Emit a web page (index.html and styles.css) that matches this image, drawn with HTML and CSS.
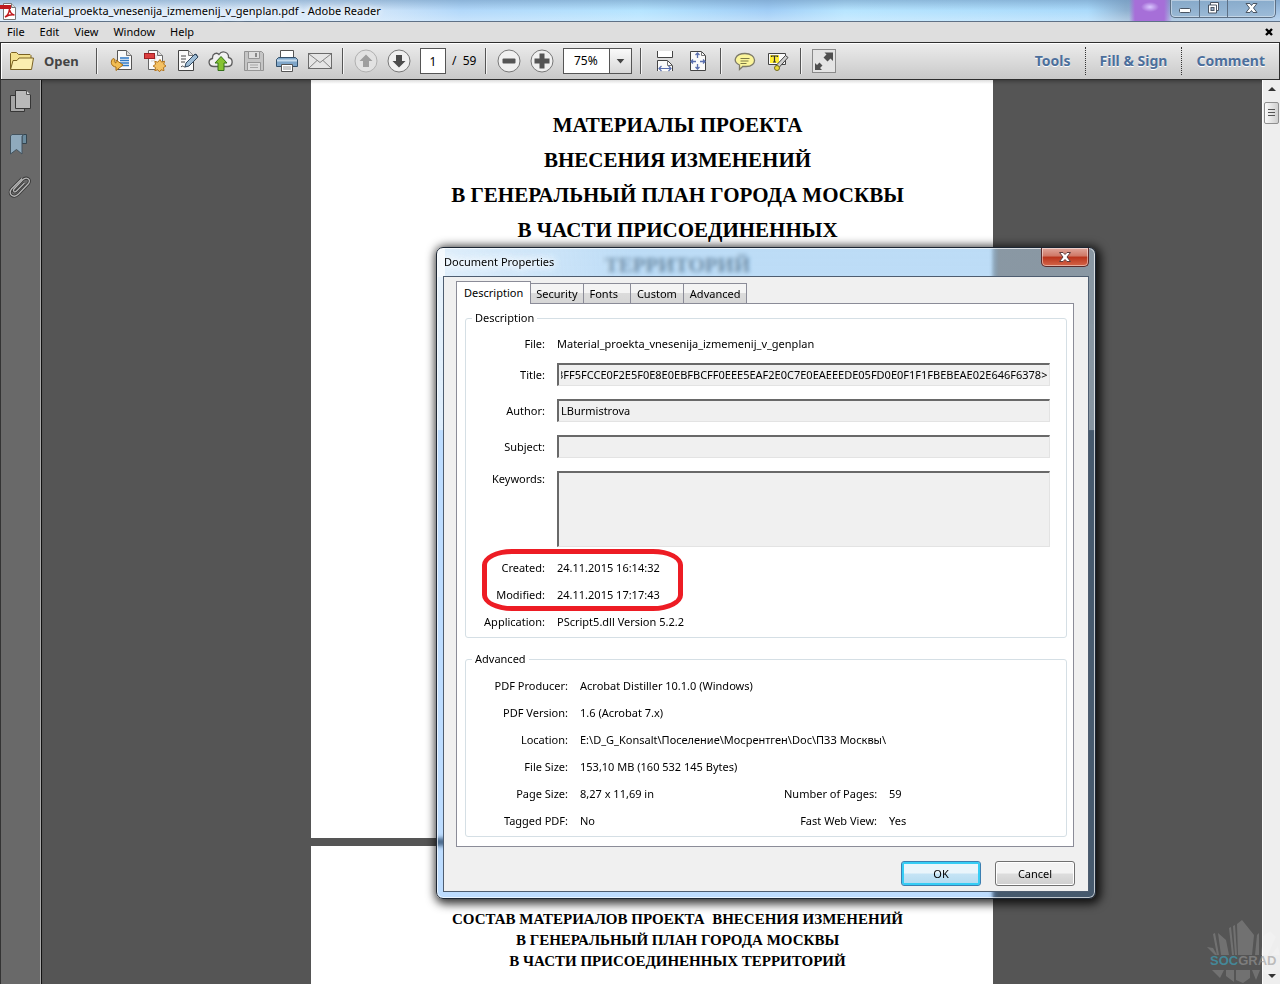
FILE: index.html
```html
<!DOCTYPE html>
<html lang="en">
<head>
<meta charset="utf-8">
<title>Material_proekta_vnesenija_izmemenij_v_genplan.pdf - Adobe Reader</title>
<link rel="stylesheet" href="styles.css">
</head>
<body>
<div class="app">
  <header class="titlebar">
    <svg class="app-icon" width="17" height="18" viewBox="0 0 17 18"><path d="M3.500 1.500h8l4 4v12h-12z" fill="#fff" stroke="#777"/><path d="M11.500 1.500v4h4" fill="#ddd" stroke="#777"/><path d="M0 3h11v4H0z" fill="#c01a1f"/><path d="M5 15c2-1 4-4 4.500-8 .5 3 2 5.500 5 6-3-.5-6 0-9.500 2z" fill="none" stroke="#c01a1f" stroke-width="1.500"/></svg>
    <span class="app-title">Material_proekta_vnesenija_izmemenij_v_genplan.pdf - Adobe Reader</span>
    <div class="win-buttons">
      <button aria-label="Minimize"><svg width="28" height="17" viewBox="0 0 28 17"><rect x="8.500" y="8.500" width="11" height="4" rx="1" fill="#fff" stroke="#4a5563"/></svg></button>
      <button aria-label="Restore"><svg width="27" height="17" viewBox="0 0 27 17"><path d="M10.500 2.500h8v8h-2v2.500h-8v-8h2z" fill="#fff" stroke="#4a5563"/><path d="M10.500 5h6v6" fill="none" stroke="#4a5563"/><rect x="11" y="7.500" width="3" height="3" fill="#9db4cc" stroke="#4a5563"/></svg></button>
      <button class="wide" aria-label="Close"><svg width="47" height="17" viewBox="0 0 47 17"><path d="M18 3.500h4l1.500 2 1.500-2h4l-3.500 4.500 3.500 4.500h-4l-1.500-2-1.500 2h-4l3.500-4.500z" fill="#fff" stroke="#4a5563"/></svg></button>
    </div>
  </header>

  <nav class="menubar">
    <button>File</button><button>Edit</button><button>View</button><button>Window</button><button>Help</button>
    <button class="menu-close" aria-label="Close document"><svg width="8" height="8" viewBox="0 0 8 8"><path d="M1 1l6 6M7 1l-6 6" stroke="#000" stroke-width="2.400"/></svg></button>
  </nav>

  <div class="toolbar">
    <button class="open"><svg width="26" height="24" viewBox="0 0 26 24"><path d="M1.500 20V4.500l1-1h5l2 2h11.500l1 1V9" fill="#f3e190" stroke="#7a6224"/><path d="M1.500 20.500L4 11.500h4l2-2.500h14.500l-2 11.500z" fill="#fbeeb0" stroke="#7a6224"/></svg>Open</button>
    <i class="sep"></i>
    <div class="group files">
      <button aria-label="Convert"><svg width="24" height="24" viewBox="0 0 24 24"><path d="M7.500 1.500h9l5 5v14h-14z" fill="#fafafa" stroke="#555"/><path d="M16.500 1.500v5h5" fill="#ddd" stroke="#777"/><path d="M10 9h9M10 11.500h9M10 14h9M11 16.500h8" stroke="#2f7ac6" stroke-width="1.300"/><path d="M3 9.500c-3 3-2 8 3 8.500v3.500l7-5.500-7-5v3c-2-.5-2-2-1-3.500z" fill="#f1bd53" stroke="#a66c11"/></svg></button>
      <button aria-label="Create PDF"><svg width="24" height="24" viewBox="0 0 24 24"><path d="M5.500 1.500h9l5 5v14h-14z" fill="#fafafa" stroke="#666"/><path d="M14.500 1.500v5h5" fill="#ddd" stroke="#777"/><rect x="1.500" y="4.500" width="10" height="5" fill="#dc3f3f" stroke="#9d2024"/><path d="M8 12c4 0 5-2 5-6" fill="none" stroke="#ccc"/><path d="M17 10.500l1.600 2.600 3-.9-.9 3 2.300 1.800-2.600 1.600.6 3-3-.8-1.500 2-1.700-2-3 .8.800-3-2.500-1.500 2.500-1.800-.8-3 3 .9z" fill="#f4c163" stroke="#b3741c"/></svg></button>
      <button aria-label="Sign"><svg width="24" height="24" viewBox="0 0 24 24"><path d="M2.500 1.500h10l5 5v15h-15z" fill="#fafafa" stroke="#444"/><path d="M12.500 1.500v5h5" fill="#ddd" stroke="#777"/><path d="M5 7h5M5 10h5M5 13h4M5 18c3-3 2 2 5-1" fill="none" stroke="#444"/><path d="M9 18l1-4L19 5l3 3-9 9z" fill="#9fbdd6" stroke="#30475e"/><path d="M18 6l2-1 2 3" fill="none" stroke="#30475e"/></svg></button>
      <button aria-label="Upload"><svg width="26" height="24" viewBox="0 0 26 24"><path d="M6 17.500c-6 0-6.500-7-1.500-8C4 4.500 9 3 11 5.500 14 1 21 3 20.500 8.500c5 1 5 9-1 9z" fill="#f1f1f1" stroke="#5c5c5c" stroke-width="1.300"/><path d="M13 7.500l6 6.500h-3v7.500h-6V14H7z" fill="#86c232" stroke="#35711b"/></svg></button>
      <button aria-label="Save" disabled><svg width="24" height="24" viewBox="0 0 24 24"><path d="M2.500 2.500h17l2 2v17h-19z" fill="#c5c5c5" stroke="#929292"/><path d="M6.500 2.500v7h11v-7zM5.500 13.500h13v8h-13z" fill="#dedede" stroke="#959595"/><rect x="13" y="4" width="2" height="4" fill="#888"/><path d="M8 16h8M8 18.500h8" stroke="#a5a5a5"/></svg></button>
      <button aria-label="Print"><svg width="24" height="24" viewBox="0 0 24 24"><path d="M5.500 1.500h13v9h-13z" fill="#fff" stroke="#555"/><path d="M1.500 10.500l2-2h17l2 2v7h-21z" fill="#7fa6c9" stroke="#34516b"/><path d="M2 11.500h20" stroke="#c9dded" stroke-width="2"/><path d="M6.500 15.500h11v7h-11z" fill="#fff" stroke="#555"/><path d="M8 18h8M8 20h8" stroke="#999"/></svg></button>
      <button aria-label="E-mail"><svg width="24" height="24" viewBox="0 0 24 24"><rect x=".5" y="4.500" width="23" height="15" fill="#e5e5e5" stroke="#6b6b6b"/><path d="M1 5l11 8.500L23 5M1 19l8-7.500M23 19l-8-7.500" fill="none" stroke="#838383"/></svg></button>
    </div>
    <i class="sep"></i>
    <div class="group">
      <button aria-label="Previous page" disabled><svg width="24" height="24" viewBox="0 0 24 24"><circle cx="12" cy="12" r="11" fill="#e2e2e2" stroke="#b0b0b0"/><path d="M12 5.500l6.500 6.500H15v6H9v-6H5.500z" fill="#9e9e9e"/></svg></button>
      <button aria-label="Next page"><svg width="24" height="24" viewBox="0 0 24 24"><circle cx="12" cy="12" r="11" fill="#f0f0f0" stroke="#777"/><path d="M12 18.500L5.500 12H9V6h6v6h3.500z" fill="#4c4c4c"/></svg></button>
    </div>
    <input class="page-no" aria-label="Page number" value="1">
    <span class="page-count">/&nbsp; 59</span>
    <i class="sep"></i>
    <div class="group">
      <button aria-label="Zoom out"><svg width="24" height="24" viewBox="0 0 24 24"><circle cx="12" cy="12" r="11" fill="#f0f0f0" stroke="#777"/><rect x="5.500" y="9.500" width="13" height="5" rx="1" fill="#555"/></svg></button>
      <button aria-label="Zoom in"><svg width="24" height="24" viewBox="0 0 24 24"><circle cx="12" cy="12" r="11" fill="#f0f0f0" stroke="#777"/><path d="M9.500 4.500h5v5h5v5h-5v5h-5v-5h-5v-5h5z" fill="#555"/></svg></button>
    </div>
    <div class="zoom">
      <select aria-label="Zoom level"><option>75%</option><option>100%</option></select>
      <svg class="zoom-arrow" width="22" height="24" viewBox="0 0 22 24"><path d="M7 10h8l-4 4.500z" fill="#444"/></svg>
    </div>
    <i class="sep"></i>
    <div class="group roomy">
      <button aria-label="Fit width"><svg width="24" height="24" viewBox="0 0 24 24"><path d="M4.500 2v6.500h15V2" fill="#fff" stroke="#444"/><path d="M4.500 22V11.500h10l5 5V22" fill="#fafafa" stroke="#444"/><path d="M14.500 11.500v5h5" fill="none" stroke="#777"/><path d="M6 19.500h12M8.500 17L6 19.500 8.500 22M15.500 17l2.500 2.500-2.500 2.500" fill="none" stroke="#5a6fae" stroke-width="1.200"/></svg></button>
      <button aria-label="Fit page"><svg width="24" height="24" viewBox="0 0 24 24"><path d="M4.500 2.500h11l4 4v15h-15z" fill="#fafafa" stroke="#444"/><path d="M15.500 2.500v4h4" fill="none" stroke="#777"/><path d="M5 12.500h5M14 12.500h5M11.500 4.500V9M11.500 15v5M7 10.500l-2 2 2 2M17 10.500l2 2-2 2M9.500 6l2-2 2 2M9.500 18l2 2 2-2" fill="none" stroke="#5a6fae" stroke-width="1.300"/></svg></button>
    </div>
    <i class="sep"></i>
    <div class="group roomy">
      <button aria-label="Sticky note"><svg width="24" height="24" viewBox="0 0 24 24"><path d="M12 4.500c12 0 13 13 1 13-2 0-3-.2-3-.2L6.500 20.500v-4.500C-1 12.500 2 4.500 12 4.500z" fill="#fbf59a" stroke="#7d7a68" stroke-width="1.300"/><path d="M7.500 9.500h9M7.500 12h8M7.500 14.500h6" stroke="#7d7a45"/></svg></button>
      <button aria-label="Highlight text"><svg width="24" height="24" viewBox="0 0 24 24"><path d="M2.500 4.500h17v11h-17z" fill="#fafafa" stroke="#444"/><rect x="4" y="6" width="9" height="8" fill="#ffee35"/><path d="M5.500 8V7h6v1M8.500 7v6M7 13h3" fill="none" stroke="#333" stroke-width="1.200"/><path d="M10 16.500l9.500-10 2.500 2-9 10z" fill="#cfcfcf" stroke="#444"/><circle cx="11" cy="19" r="2.500" fill="#eadb3c" stroke="#746b1d"/></svg></button>
    </div>
    <i class="sep"></i>
    <button class="fullscreen" aria-label="Read mode"><svg width="24" height="24" viewBox="0 0 24 24"><rect x=".5" y=".5" width="23" height="23" fill="#e4e4e4" stroke="#8a8a8a"/><path d="M12.500 3.500H21V12l-2.500-2.500-3 3-4-4 3-3zM3 21v-7l2 2 2.500-2.500 3 3L8 19l2 2z" fill="#4f4f4f"/></svg></button>
    <div class="panes"><button>Tools</button><button>Fill &amp; Sign</button><button>Comment</button></div>
  </div>

  <div class="workspace">
    <aside class="sidebar">
      <button aria-label="Page thumbnails"><svg width="24" height="24" viewBox="0 0 24 24"><path d="M2.500 6.500h14v16h-14z" fill="#a5a5a5" stroke="#363636"/><path d="M7.500 1.500h11l4 4v14h-15z" fill="#b9b9b9" stroke="#363636"/><path d="M18.500 1.500v4h4" fill="#ddd" stroke="#555"/></svg></button>
      <button aria-label="Bookmarks"><svg width="24" height="24" viewBox="0 0 24 24"><path d="M14 2.500h4.500v9H14z" fill="#6b8b9e" stroke="#34444e"/><path d="M2.500 22V4l1.500-1.500h12L14 4v18l-5.500-4.500z" fill="#8faabd" stroke="#43535e"/></svg></button>
      <button aria-label="Attachments"><svg width="24" height="24" viewBox="0 0 24 24" fill="none"><path d="M16.500 8l-8 8c-2 2-4 0-2.500-2L14.500 5c4-4 9-.5 6 3.500L10.500 19c-5 5-11 0-7-5L14 3.500" stroke="#363636" stroke-width="3"/><path d="M16.500 8l-8 8c-2 2-4 0-2.500-2L14.500 5c4-4 9-.5 6 3.500L10.500 19c-5 5-11 0-7-5L14 3.500" stroke="#b5b5b5" stroke-width="1.300"/></svg></button>
    </aside>
    <main class="viewer">
      <section class="sheet first">
        <h1>МАТЕРИАЛЫ ПРОЕКТА<br>ВНЕСЕНИЯ ИЗМЕНЕНИЙ<br>В ГЕНЕРАЛЬНЫЙ ПЛАН ГОРОДА МОСКВЫ<br>В ЧАСТИ ПРИСОЕДИНЕННЫХ<br>ТЕРРИТОРИЙ</h1>
      </section>
      <section class="sheet second">
        <h2>СОСТАВ МАТЕРИАЛОВ ПРОЕКТА&nbsp; ВНЕСЕНИЯ ИЗМЕНЕНИЙ<br>В ГЕНЕРАЛЬНЫЙ ПЛАН ГОРОДА МОСКВЫ<br>В ЧАСТИ ПРИСОЕДИНЕННЫХ ТЕРРИТОРИЙ</h2>
      </section>
    </main>
    <div class="scrollbar">
      <button aria-label="Scroll up"><svg width="17" height="17" viewBox="0 0 17 17"><path d="M5 11h8L9 7z" fill="#333"/></svg></button>
      <div class="thumb"><svg width="8" height="8" viewBox="0 0 8 8"><path d="M0 .5h7M0 3.500h7M0 6.500h7" stroke="#555"/></svg></div>
      <button class="down" aria-label="Scroll down"><svg width="17" height="17" viewBox="0 0 17 17"><path d="M5 7h8l-4 4z" fill="#333"/></svg></button>
    </div>
  </div>

  <div class="dialog" role="dialog" aria-labelledby="dlg-title">
    <div class="dialog-title">
      <span id="dlg-title">Document Properties</span>
      <button class="dialog-close" aria-label="Close"><svg width="14" height="12" viewBox="0 0 14 12"><path d="M1.500 1.500h3.500l2 2 2-2h3.500L9 6l3.500 4.500H9l-2-2-2 2H1.500L5 6z" fill="#fff" stroke="#5d3a3a"/></svg></button>
    </div>
    <div class="client">
      <div class="tabs" role="tablist">
        <button role="tab" class="tab active" aria-selected="true">Description</button><button role="tab" class="tab">Security</button><button role="tab" class="tab fonts">Fonts</button><button role="tab" class="tab custom">Custom</button><button role="tab" class="tab custom">Advanced</button>
      </div>
      <div class="panel">
        <fieldset class="desc">
          <legend>Description</legend>
          <div class="row"><span class="key">File:</span><span>Material_proekta_vnesenija_izmemenij_v_genplan</span></div>
          <div class="field"><label class="key" for="f-title">Title:</label><input id="f-title" readonly value="3FF5FCCE0F2E5F0E8E0EBFBCFF0EEE5EAF2E0C7E0EAEEEDE05FD0E0F1F1FBEBEAE02E646F6378&gt;"></div>
          <div class="field"><label class="key" for="f-author">Author:</label><input id="f-author" readonly value="LBurmistrova"></div>
          <div class="field"><label class="key" for="f-subject">Subject:</label><input id="f-subject" readonly></div>
          <div class="field tall"><label class="key" for="f-keywords">Keywords:</label><textarea id="f-keywords" readonly></textarea></div>
          <div class="dates">
            <div class="row"><span class="key">Created:</span><span>24.11.2015 16:14:32</span></div>
            <div class="row"><span class="key">Modified:</span><span>24.11.2015 17:17:43</span></div>
            <i class="ring"></i>
          </div>
          <div class="row"><span class="key">Application:</span><span>PScript5.dll Version 5.2.2</span></div>
        </fieldset>
        <fieldset class="adv">
          <legend>Advanced</legend>
          <div class="row"><span class="key">PDF Producer:</span><span>Acrobat Distiller 10.1.0 (Windows)</span></div>
          <div class="row"><span class="key">PDF Version:</span><span>1.6 (Acrobat 7.x)</span></div>
          <div class="row"><span class="key">Location:</span><span>E:\D_G_Konsalt\Поселение\Мосрентген\Doc\ПЗЗ Москвы\</span></div>
          <div class="row"><span class="key">File Size:</span><span>153,10 MB (160 532 145 Bytes)</span></div>
          <div class="row"><span class="key">Page Size:</span><span class="first-val">8,27 x 11,69 in</span><span class="key">Number of Pages:</span><span>59</span></div>
          <div class="row"><span class="key">Tagged PDF:</span><span class="first-val">No</span><span class="key">Fast Web View:</span><span>Yes</span></div>
        </fieldset>
      </div>
      <div class="actions"><button class="push default">OK</button><button class="push">Cancel</button></div>
    </div>
  </div>

  <svg class="watermark" width="76" height="68" viewBox="0 0 76 68">
    <g fill="#fff" fill-opacity=".17"><path d="M34 39L33 8l5-4 12 15-2 20zM31 39l-2-29 2-1 2 30zM28 39l-3-27 2-1 3 28zM25 39H17L14 17l8 7zM23 39M15 39l-4-22-2 1 4 21zM11 39L3 31l6 1 4 7zM51 39l2-20 2-2v22zM57 39l2-19 7-5 6 6-8 18zM67 39l7-9 2 9z"/><path d="M32 54h14v8l-7 5-7-3zM22 54h8v12l-8-6zM8 54h12l-4 8zM48 54h8l-4 10zM58 54h14l-8 6z"/></g>
    <text x="6" y="49" class="wm-text"><tspan fill="#3f9ab0" fill-opacity=".75">SOC</tspan><tspan fill="#999" fill-opacity=".6">GRAD</tspan></text>
  </svg>
</div>
<script src="app.js"></script>
</body>
</html>
```
FILE: styles.css
```css
* { box-sizing: border-box; }
body { margin: 0; font-family: "Noto Sans", "Open Sans", sans-serif; font-size: 11px; line-height: 16px; color: #000; }
button { margin: 0; padding: 0; border: 0; background: none; font: inherit; color: inherit; }
svg { display: block; }
input, select, textarea { font: inherit; color: inherit; border-radius: 0; outline: 0; }
.app { position: relative; display: flex; flex-direction: column; height: 100vh; min-width: 1100px; overflow: hidden; }

.titlebar { display: flex; align-items: flex-start; height: 22px; padding-right: 4px; border-bottom: 1px solid #5f7186;
  background:
    radial-gradient(ellipse 9px 5px at calc(100% - 130px) 7px, #d9c8ff, #d9c8ff00),
    linear-gradient(90deg, #a66fd800 calc(100% - 151px), #a66fd8 calc(100% - 145px), #a66fd8 calc(100% - 116px), #a66fd800 calc(100% - 108px)),
    linear-gradient(#6a93bb88, #ffffff00 50%, #e7f4ff66),
    linear-gradient(90deg, #dcebfa 0, #d5e7f9 28%, #b2d8fa 36%, #b5e4ff 50%, #a0cdf6 60%, #b7e5ff 66%, #aadafb 85%, #8eb0cf 88%, #9fc0e2 100%); }
.app-icon { margin-top: 2px; }
.app-title { flex: 1; padding: 3px 0 0 4px; text-shadow: 0 0 6px #fff, 0 0 6px #fff; }
.win-buttons { display: flex; height: 18px; border: 1px solid #5d7085; border-top: 0; border-radius: 0 0 5px 5px; box-shadow: inset 0 0 0 1px #ffffff66; background: #8faecb88; }
.win-buttons button + button { border-left: 1px solid #5d7085; }

.menubar { display: flex; align-items: center; height: 20px; padding: 0 7px 0 1px; background: #dedede; }
.menubar button { padding: 0 6px; margin-right: 3px; }
.menubar .menu-close { margin: 0 0 0 auto; padding: 0; }

.toolbar { display: flex; align-items: center; height: 38px; padding-left: 8px; border: 1px solid #2e2e2e; box-shadow: inset 1px 1px #fff; background: linear-gradient(#ececec, #c9c9c9); }
.toolbar .open { display: flex; align-items: center; gap: 9px; width: 87px; font-size: 13px; font-weight: 700; color: #444; }
.sep { width: 2px; height: 26px; border-left: 1px solid #555; background: #f4f4f4; }
.group { display: flex; margin: 0 5px; }
.group.files { margin: 0 6px 0 7px; }
.group.roomy { margin: 0 6px; }
.group button { display: flex; justify-content: center; width: 33px; }
.page-no { width: 26px; height: 26px; padding: 0; border: 1px solid #555; background: #fff; text-align: center; font-size: 12px; }
.page-count { width: 39px; padding-left: 6px; font-size: 12px; white-space: nowrap; }
.zoom { position: relative; width: 69px; height: 26px; margin-right: 8px; }
.zoom select { width: 100%; height: 26px; padding: 0 0 0 10px; border: 1px solid #555; appearance: none; background: #fff; font-size: 12px; }
.zoom-arrow { position: absolute; top: 1px; right: 1px; pointer-events: none; border-left: 1px solid #555; background: linear-gradient(#fafafa, #d8d8d8); }
.fullscreen { margin-left: 10px; }
.panes { display: flex; margin-left: auto; }
.panes button { height: 28px; padding: 0 14px; font-size: 14px; font-weight: 700; color: #4c6f9c; white-space: nowrap; text-shadow: 0 1px #fff; }
.panes button + button { border-left: 1px dotted #333; }

.workspace { flex: 1; display: flex; min-height: 0; background: #555; }
.sidebar { display: flex; flex-direction: column; align-items: center; gap: 19px; width: 42px; padding: 9px 3px 0 0; border-left: 1px solid #333; border-right: 1px solid #111; box-shadow: inset -1px 0 #aaa; background: #696969; }
.viewer { flex: 1; overflow: hidden; display: flex; flex-direction: column; align-items: center; box-shadow: inset 0 4px 4px -3px #0006; }
.sheet { flex: none; width: 100%; max-width: 682px; padding-left: 51px; text-align: center; white-space: nowrap; background: #fff linear-gradient(#0002, #0000) top / 100% 4px no-repeat; font-family: "Liberation Serif", serif; }
.sheet h1, .sheet h2 { margin: 0; font-weight: 700; }
.sheet.first { height: 758px; padding-top: 28px; }
.sheet.second { height: 758px; margin-top: 8px; padding-top: 63px; background: #fff; }
.sheet h1 { font-size: 21px; line-height: 35px; }
.sheet h2 { font-size: 15px; line-height: 21px; }
.scrollbar { display: flex; flex-direction: column; width: 18px; border-left: 1px solid #fff; background: #eee; }
.scrollbar .thumb { display: flex; align-items: center; justify-content: center; width: 15px; height: 22px; margin: 5px 0 0 1px; border: 1px solid #8f8f8f; border-radius: 2px; background: linear-gradient(90deg, #fafafa, #cfcfcf); }
.scrollbar .down { margin-top: auto; }

.dialog { position: absolute; top: 247px; left: 436px; width: 660px; padding: 0 6px 6px; border: 1px solid #1c2633; border-radius: 7px; box-shadow: inset 0 0 0 1px #ffffffaa, 2px 2px 10px 3px #000c; backdrop-filter: blur(2px);
  background:
    linear-gradient(90deg, #8a949c00 calc(100% - 104px), #8a949ccc calc(100% - 96px)) top / 100% 182px no-repeat,
    linear-gradient(90deg, #46566600 calc(100% - 104px), #465666cc calc(100% - 96px)) bottom / 100% calc(100% - 182px) no-repeat,
    linear-gradient(#ffffffaa, #ffffff77) left top / 8px 182px no-repeat,
    linear-gradient(90deg, #ffffff88, #fff0 30%) top / 100% 29px no-repeat,
    linear-gradient(#a0cdf2b2 0, #96c8f899 182px, #3294ff52 183px, #3294ff52 100%); }
.dialog-title { display: flex; align-items: flex-start; justify-content: space-between; height: 28px; padding-left: 1px; }
.dialog-title span { padding-top: 6px; text-shadow: 0 0 6px #fff, 0 0 8px #fff, 0 0 10px #fff; }
.dialog-close { display: flex; align-items: center; justify-content: center; width: 48px; height: 19px; border: 1px solid #5a2a2a; border-top: 0; border-radius: 0 0 5px 5px; box-shadow: inset 0 0 0 1px #ffffff77; background: linear-gradient(#e0a79c, #cf7765 45%, #b9331b 50%, #d4664a); }
.client { border: 1px solid #4e5d70; background: #f0f0f0; padding: 4px 14px 5px 12px; }
.tabs { display: flex; align-items: flex-end; }
.tab { height: 20px; padding: 0 5px; border: 1px solid #8b8c98; border-bottom: 0; margin-left: -1px; background: linear-gradient(#f4f4f4 45%, #dcdcdc 50%, #d6d6d6); }
.tab.fonts { padding: 0 12px 0 6px; }
.tab.custom { padding: 0 6px; }
.tab.active { height: 23px; padding: 0 7px; margin: 0 0 -1px; background: #fff; position: relative; }
.panel { padding: 6px 6px 9px 8px; border: 1px solid #8b8c98; background: #fff; }
fieldset { margin: 0; padding: 0 16px 2px 9px; border: 1px solid #d5dfe5; border-radius: 3px; min-width: 0; }
legend { margin-left: -3px; padding: 0 3px; }
.adv { margin-top: 13px; }
.row { display: flex; align-items: center; height: 27px; white-space: nowrap; }
.desc > .row:first-of-type { margin-top: 4px; }
.key { flex: none; width: 70px; margin-right: 12px; text-align: right; }
.field { display: flex; align-items: center; margin-top: 13px; }
.row + .field { margin-top: 6px; }
.field input, .field textarea { flex: 1; min-width: 0; height: 23px; padding: 0 2px 2px; border: 1px solid #e3e3e3; border-top: 2px solid #696969; border-left: 2px solid #696969; background: #f0f0f0; }
.field textarea { height: 76px; resize: none; }
.field.tall { align-items: flex-start; }
.dates { position: relative; margin-top: 7px; }
.ring { position: absolute; top: -5px; left: 7px; width: 201px; height: 62px; border: 5px solid #ed1c24; border-radius: 30px / 16px; pointer-events: none; }
.adv .row:first-of-type { margin-top: 5px; }
.adv .key { width: 93px; }
.adv .first-val { width: 204px; }
.actions { display: flex; justify-content: flex-end; gap: 14px; margin: 14px -1px 0 0; }
.push { width: 80px; height: 25px; border: 1px solid #707070; border-radius: 3px; box-shadow: inset 0 0 0 1px #fff; background: linear-gradient(#f3f3f3 48%, #dddddd 52%, #cfcfcf); }
.push.default { border-color: #3c7fb1; box-shadow: inset 0 0 0 2px #36cdf5; background: linear-gradient(#eaf5fb 48%, #c5e4f5 52%, #b2daf0); }
.watermark { position: absolute; right: 0; bottom: 0; pointer-events: none; }
.wm-text { font: 700 13px "Liberation Sans", sans-serif; }
```
FILE: app.js
```js
// Show the tail of a title that is longer than its field.
const title = document.getElementById('f-title');
title.scrollLeft = title.scrollWidth;
```
